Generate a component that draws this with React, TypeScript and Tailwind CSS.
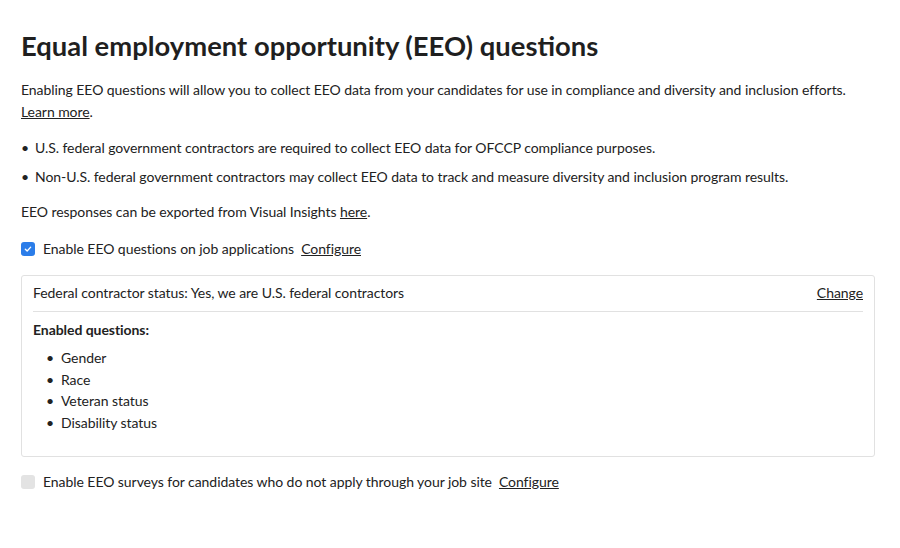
export default function App() {
  const questions = ["Gender", "Race", "Veteran status", "Disability status"];

  return (
    <main className="min-h-screen bg-white pl-[21px] pr-[25px] pt-[28px] text-[14px] leading-[22px] tracking-[-0.06px] text-[#222222] [font-family:Lato,'Noto_Sans',sans-serif]">
      <h1 className="text-[27.4px] font-bold leading-[36px] tracking-normal text-[#1f1f1f]">
        Equal employment opportunity (EEO) questions
      </h1>

      <p className="mt-[15px]">
        Enabling EEO questions will allow you to collect EEO data from your candidates for use in compliance and diversity and inclusion efforts.{" "}
        <a href="#" className="underline">Learn more</a>.
      </p>

      <ul className="mt-[14px] flex flex-col gap-[7px]">
        <li className="flex gap-[7px]">
          <span className="w-[7px] text-center">•</span>
          <span>U.S. federal government contractors are required to collect EEO data for OFCCP compliance purposes.</span>
        </li>
        <li className="flex gap-[7px]">
          <span className="w-[7px] text-center">•</span>
          <span>Non-U.S. federal government contractors may collect EEO data to track and measure diversity and inclusion program results.</span>
        </li>
      </ul>

      <p className="mt-[13px]">
        EEO responses can be exported from Visual Insights <a href="#" className="underline">here</a>.
      </p>

      <div className="mt-[15px] flex items-center">
        <span className="flex h-[14px] w-[14px] items-center justify-center rounded-[3px] bg-[#2b7de9]">
          <svg viewBox="0 0 12 12" className="h-[10px] w-[10px]" fill="none" stroke="white" strokeWidth="1.6" strokeLinecap="round" strokeLinejoin="round">
            <path d="M2.8 6.2l2.2 2.2 4.2-4.6" />
          </svg>
        </span>
        <span className="ml-[8px]">Enable EEO questions on job applications</span>
        <a href="#" className="ml-[7px] underline">Configure</a>
      </div>

      <section className="mt-[15px] rounded-[3px] border border-[#e1e1e1] px-[11px] pb-[22px]">
        <div className="flex items-center justify-between border-b border-[#e1e1e1] pt-[6px] pb-[7px]">
          <span>Federal contractor status: Yes, we are U.S. federal contractors</span>
          <a href="#" className="underline">Change</a>
        </div>
        <p className="mt-[7px] font-bold">Enabled questions:</p>
        <ul className="mt-[6px] flex flex-col pl-[13px] leading-[21.7px]">
          {questions.map((q) => (
            <li key={q} className="flex gap-[8px]">
              <span className="w-[7px] text-center">•</span>
              <span>{q}</span>
            </li>
          ))}
        </ul>
      </section>

      <div className="mt-[14px] flex items-center">
        <span className="h-[14px] w-[14px] rounded-[3px] bg-[#e3e3e3]" />
        <span className="ml-[8px]">Enable EEO surveys for candidates who do not apply through your job site</span>
        <a href="#" className="ml-[7px] underline">Configure</a>
      </div>
    </main>
  );
}
